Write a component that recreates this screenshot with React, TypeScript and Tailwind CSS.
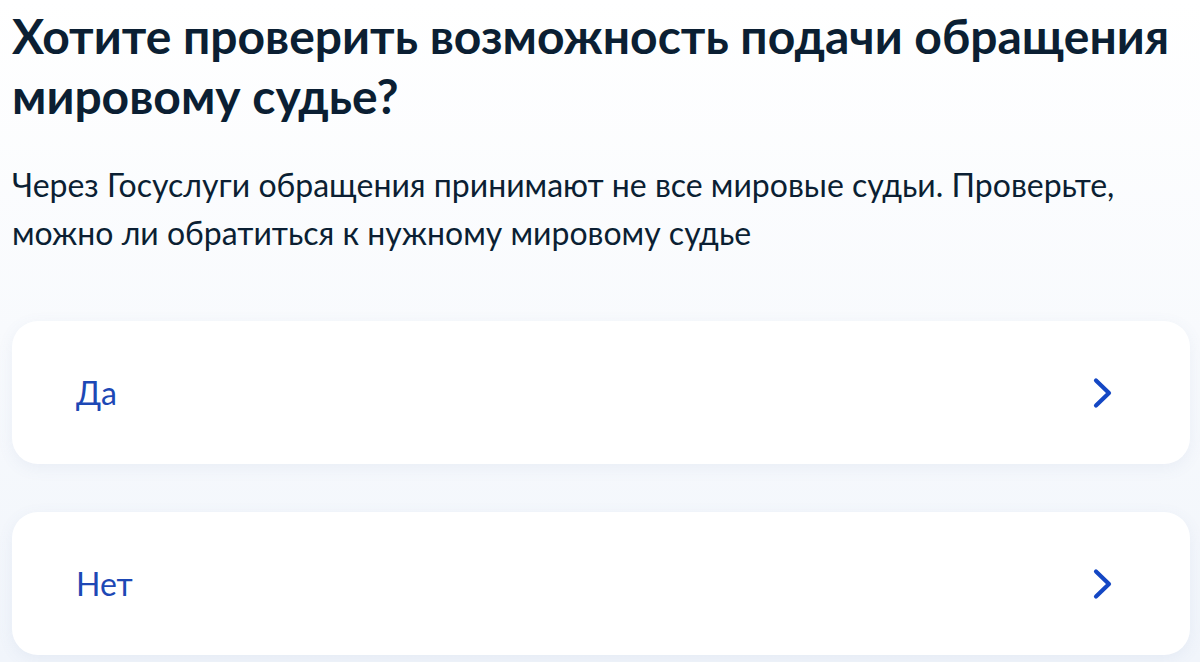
import React from "react";

function Chevron() {
  return (
    <svg width="22" height="32" viewBox="0 0 22 32" fill="none">
      <path d="M4 3.5 L17 16 L4 28.5" stroke="#1447c4" strokeWidth="4.2" strokeLinecap="round" strokeLinejoin="round" />
    </svg>
  );
}

function Option({ label }: { label: string }) {
  return (
    <div className="flex h-[143px] items-center justify-between rounded-[26px] bg-white pl-[64px] pr-[76px] shadow-[0_4px_16px_rgba(90,120,170,0.08)]">
      <span className="text-[32px] text-[#1d48b5]">{label}</span>
      <Chevron />
    </div>
  );
}

export default function App() {
  return (
    <div
      className="h-[662px] w-[1200px] overflow-hidden bg-gradient-to-b from-[#ffffff] via-[#f8fafd] to-[#f1f5fb] pl-[12px] pr-[10px] pt-[6px]"
      style={{ fontFamily: "Lato, 'Noto Sans', sans-serif" }}
    >
      <h1 className="text-[48px] font-bold leading-[60px] text-[#0b1f33]">
        Хотите проверить возможность подачи обращения мировому судье?
      </h1>
      <p className="mt-[35px] text-[32px] leading-[48px] text-[#0b1f33]">
        Через Госуслуги обращения принимают не все мировые судьи. Проверьте, можно ли обратиться к нужному мировому судье
      </p>
      <div className="mt-[64px] flex flex-col gap-[48px]">
        <Option label="Да" />
        <Option label="Нет" />
      </div>
    </div>
  );
}
